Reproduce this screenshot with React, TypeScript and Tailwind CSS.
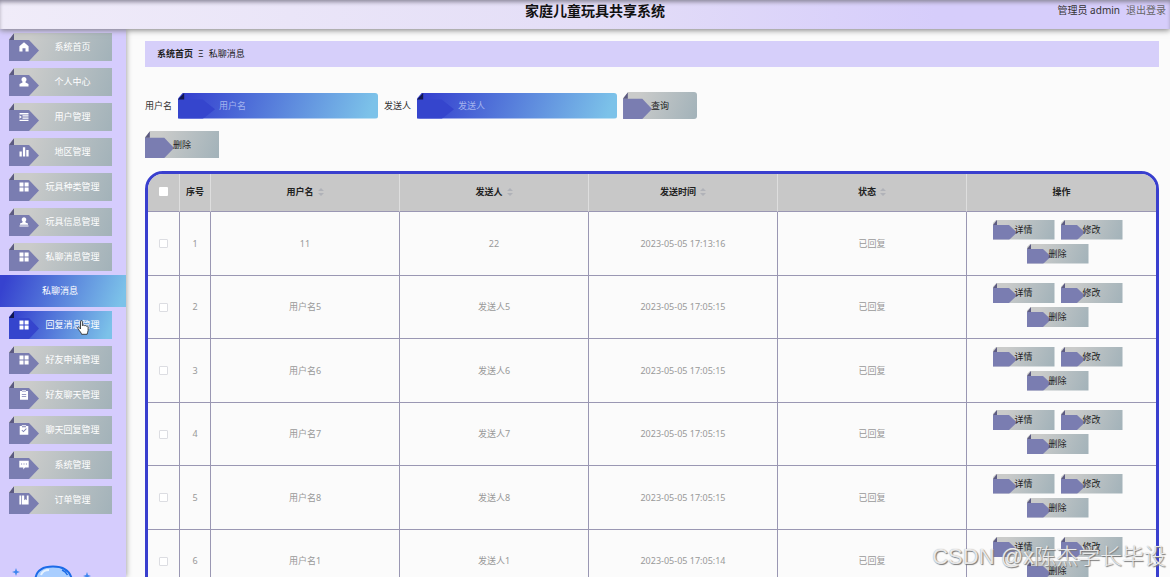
import React from 'react'

type IconName = 'home' | 'user' | 'list' | 'chart' | 'grid' | 'stamp' | 'clipboard' | 'check' | 'chat' | 'book'

const icons: Record<IconName, React.ReactNode> = {
    home: <path d="M5 .3 9.6 4.2V9.6H6.5V6.2H3.5V9.6H.4V4.2Z" />,
    user: <path d="M5 0a2.6 2.6 0 0 1 1.500 4.700v.8L9.500 7v2.600H.5V7l3-1.500v-.8A2.600 2.600 0 0 1 5 0Z" />,
    list: <path d="M.5 1h9v1.400h-9zM3.500 3.300h6v1.300h-6zM3.500 5.500h6v1.300h-6zM.5 7.700h9v1.400h-9zM.5 3.300 2.800 5 .5 6.800z" />,
    chart: <path d="M.5 4.500h2.300v5H.5zM3.900.3h2.300v9.200H3.900zM7.300 3h2.300v6.500H7.300z" />,
    grid: <path d="M.5.5h4v4h-4zM5.600.5h4v4h-4zM.5 5.600h4v4h-4zM5.600 5.600h4v4h-4z" />,
    stamp: <path d="M5 .2a2.400 2.400 0 0 1 1.400 4.300c0 1 .5 1.500 2.600 1.900V7.800H1V6.400c2.100-.4 2.600-.9 2.600-1.900A2.400 2.400 0 0 1 5 .2ZM.5 8.500h9v1.100h-9z" />,
    clipboard: <path fillRule="evenodd" d="M1 1h2V.2h4V1h2v8.800H1ZM3 1.800h4V1.300H3zM2.800 4v.7h4.400V4zM2.800 6.300V7h4.400v-.7z" />,
    check: <path fillRule="evenodd" d="M.7 1h2.100V.2h4.400V1h2.100v8.800H.7ZM3 1.200v1h4v-1zM2.500 5.300l1.900 2 3.300-3.400-.6-.6-2.700 2.800-1.300-1.400z" />,
    chat: <path fillRule="evenodd" d="M.3.800h9.400v6.800H6L4.300 9.500V7.600H.3ZM2.100 3.600v1h1v-1zM4.500 3.600v1h1v-1zM6.900 3.600v1h1v-1z" />,
    book: <path d="M.4.600h1.800v8.900H.4zM2.900.6h2.300v4.600l1.300-1 1.300 1V.6h1.800v8.900H2.900z" />,
}

const menuTop: { icon: IconName; text: string }[] = [
    { icon: 'home', text: '系统首页' },
    { icon: 'user', text: '个人中心' },
    { icon: 'list', text: '用户管理' },
    { icon: 'chart', text: '地区管理' },
    { icon: 'grid', text: '玩具种类管理' },
    { icon: 'stamp', text: '玩具信息管理' },
    { icon: 'grid', text: '私聊消息管理' },
]

const menuBottom: { icon: IconName; text: string; hover?: boolean }[] = [
    { icon: 'grid', text: '回复消息管理', hover: true },
    { icon: 'grid', text: '好友申请管理' },
    { icon: 'clipboard', text: '好友聊天管理' },
    { icon: 'check', text: '聊天回复管理' },
    { icon: 'chat', text: '系统管理' },
    { icon: 'book', text: '订单管理' },
]

const rows = [
    { user: '11', sender: '22', time: '2023-05-05 17:13:16' },
    { user: '用户名5', sender: '发送人5', time: '2023-05-05 17:05:15' },
    { user: '用户名6', sender: '发送人6', time: '2023-05-05 17:05:15' },
    { user: '用户名7', sender: '发送人7', time: '2023-05-05 17:05:15' },
    { user: '用户名8', sender: '发送人8', time: '2023-05-05 17:05:15' },
    { user: '用户名1', sender: '发送人1', time: '2023-05-05 17:05:14' },
]

const grey = 'bg-linear-[110deg,#cacbca_20%,#a2b2b9]'
const blue = 'bg-linear-[110deg,#3642cf_5%,#7cc2e9_95%]'
const cut = '[clip-path:polygon(5px_0,100%_0,100%_100%,0_100%,0_6px)]'
const cutSmall = '[clip-path:polygon(4px_0,100%_0,100%_100%,0_100%,0_4px)]'

// arrow label with the folded corner
const Ribbon = ({ active, className }: { active?: boolean; className: string }) => (
    <svg className={`absolute left-0 top-0 h-full ${className}`} viewBox="0 0 30 28" preserveAspectRatio="none" aria-hidden="true">
        <path d="M0 7H20L30 17.500 20 28H0Z" fill={active ? '#3545cd' : '#7a7db1'} />
        <path d="M0 7 5 0V7Z" fill={active ? '#12174f' : '#5c5a82'} />
    </svg>
)

const MenuItem = ({ icon, text, hover }: { icon: IconName; text: string; hover?: boolean }) => (
    <li>
        <button className={`relative flex h-7 w-full items-center justify-center pl-6 text-white cursor-pointer ${cut} ${hover ? blue : grey}`}>
            <Ribbon active={hover} className="w-[30px]" />
            <svg className="absolute left-[10px] top-[9px] size-[10px]" viewBox="0 0 10 10" fill="#fff" aria-hidden="true">{icons[icon]}</svg>
            <span className="relative">{text}</span>
        </button>
    </li>
)

const BigButton = ({ text, className = '' }: { text: string; className?: string }) => (
    <button className={`relative h-[27px] w-[74px] text-[#222] cursor-pointer ${cut} ${grey} ${className}`}>
        <Ribbon className="w-[29px]" />
        <span className="relative">{text}</span>
    </button>
)

const SmallButton = ({ text }: { text: string }) => (
    <button className={`relative h-5 w-[62px] text-[#222] cursor-pointer ${cutSmall} ${grey}`}>
        <Ribbon className="w-[24px]" />
        <span className="relative">{text}</span>
    </button>
)

const SearchField = ({ id, text }: { id: string; text: string }) => (
    <div className="flex items-center gap-[6px]">
        <label htmlFor={id}>{text}</label>
        <div className={`relative h-[26px] w-[200px] rounded-[3px] ${cut} ${blue}`}>
            <Ribbon active className="w-[37px]" />
            <input id={id} placeholder={text} className="relative h-full w-full bg-transparent pl-[41px] text-white outline-none placeholder:text-[#a3b3ee]" />
        </div>
    </div>
)

const Sortable = ({ text }: { text: string }) => (
    <th className="border-r border-[#dedede]">
        <span className="inline-flex items-center gap-1">
            {text}
            <svg className="h-2 w-[6px]" viewBox="0 0 6 8" fill="#b0b2b8" aria-hidden="true"><path d="M3 0 6 3H0ZM3 8 0 5H6Z" /></svg>
        </span>
    </th>
)

const App = () => {
    const cell = 'border-r border-b border-[#9a97b3] last:border-r-0'

    return (
        <div lang="zh-CN" className="relative flex h-screen flex-col overflow-hidden bg-[#fbfbfb] text-[9px] leading-3 text-[#333] font-['Noto_Sans','Noto_Sans_CJK_SC',sans-serif]">
            <header className="relative z-10 grid h-[29px] shrink-0 grid-cols-[1fr_auto_1fr] bg-linear-to-r from-[#f0ecf9] via-[#e4def7] via-50% to-[#d6cdfb] to-80% pl-5 shadow-[0_1px_6px_#777,inset_0_3px_4px_-1px_#8a8799]">
                <h1 className="col-start-2 text-sm leading-[21px] font-bold text-[#111]">家庭儿童玩具共享系统</h1>
                <div className="flex justify-end gap-[6px] pr-1 text-[10px] leading-[21px]">
                    <span>管理员 admin</span>
                    <a href="#" className="text-[#666]">退出登录</a>
                </div>
            </header>

            <div className="flex min-h-0 flex-1">
                <aside className="relative flex w-[126px] shrink-0 flex-col bg-[#d5ccfd] pt-1 shadow-[1px_0_5px_#aaa]">
                    <ul className="flex flex-col gap-[7px] pl-[9px] pr-[14px]">
                        {menuTop.map((item) => <MenuItem key={item.text} {...item} />)}
                    </ul>
                    <a href="#" className={`my-1 flex h-8 items-center justify-center pr-[6px] text-white ${blue}`}>私聊消息</a>
                    <ul className="flex flex-col gap-[7px] pl-[9px] pr-[14px]">
                        {menuBottom.map((item) => <MenuItem key={item.text} {...item} />)}
                    </ul>
                    {/* hand pointer over the hovered entry */}
                    <svg className="absolute left-[77px] top-[291px] h-[15px] w-3" viewBox="0 0 12 15" fill="#fff" stroke="#333" strokeWidth=".9" strokeLinejoin="round" aria-hidden="true">
                        <path d="M3.500 9V1.700c0-1.400 1.900-1.400 1.900 0v4c.3-1 1.700-.9 1.900.2.400-.8 1.700-.6 1.900.4.600-.6 1.900-.3 1.900.8v3.500c0 1.300-.9 2-1 3.700H4.600c-.2-1.500-2-3-3.800-6-.6-1.300.7-1.800 1.500-.8Z" />
                    </svg>
                    <svg className="absolute bottom-0 left-[10px] h-[15px] w-[84px]" viewBox="0 0 84 15" aria-hidden="true">
                        <path d="M25.500 16C27 7 34 4.500 43 4.500S59 7 61.500 16" fill="#a9ceff" stroke="#1b6be8" strokeWidth="2" />
                        <path d="M52 8c3 1 4.500 3 5.500 5" fill="none" stroke="#1b6be8" strokeWidth="1.500" />
                        <path d="M31 13c1-3 4-5 8-5" fill="none" stroke="#e6f2ff" strokeWidth="2" />
                        <path d="m6 6 1 3 3 1-3 1-1 3-1-3-3-1 3-1ZM77 10l1 3 3 1-3 1h-2l-3-1 3-1Z" fill="#3e86ee" />
                    </svg>
                </aside>

                <main className="min-w-0 flex-1 pl-[19px] pr-[11px] pt-3">
                    <nav className="flex h-[26px] items-center gap-[5px] bg-[#d6cffa] pl-3 text-[#222]">
                        <a href="#" className="font-bold">系统首页</a>
                        <span>Ξ</span>
                        <span>私聊消息</span>
                    </nav>

                    <form className="mt-[25px] flex items-center gap-[6px]">
                        <SearchField id="user" text="用户名" />
                        <SearchField id="sender" text="发送人" />
                        <BigButton text="查询" className="rounded-[3px]" />
                    </form>
                    <div className="mt-3 flex">
                        <BigButton text="删除" />
                    </div>

                    <div className="mt-[13px] overflow-hidden rounded-[18px] border-[3px] border-[#393fce]">
                        <table className="w-full table-fixed border-separate border-spacing-0 text-center text-[#999]">
                            <colgroup>
                                <col className="w-8" />
                                <col className="w-[31px]" />
                                <col span={5} />
                            </colgroup>
                            <thead className="h-[38px] bg-[#c8c8c8] text-[#222] [&_th]:border-b [&_th]:border-b-[#9a97b3] [&_th]:pb-[2px]">
                                <tr>
                                    <th className="border-r border-[#dedede]"><input type="checkbox" aria-label="全选" className="block mx-auto size-[9px] appearance-none rounded-[1px] bg-white" /></th>
                                    <th className="border-r border-[#dedede]">序号</th>
                                    <Sortable text="用户名" />
                                    <Sortable text="发送人" />
                                    <Sortable text="发送时间" />
                                    <Sortable text="状态" />
                                    <th>操作</th>
                                </tr>
                            </thead>
                            <tbody>
                                {rows.map((row, i) => (
                                    <tr key={i} className="odd:h-16 even:h-[63px]">
                                        <td className={cell}><input type="checkbox" aria-label={`选择 ${i + 1}`} className="block mx-auto size-[9px] appearance-none rounded-[1px] border border-[#dcdde2] bg-white" /></td>
                                        <td className={cell}>{i + 1}</td>
                                        <td className={cell}>{row.user}</td>
                                        <td className={cell}>{row.sender}</td>
                                        <td className={cell}>{row.time}</td>
                                        <td className={cell}>已回复</td>
                                        <td className={cell}>
                                            <div className="mx-auto flex w-[140px] flex-wrap justify-center gap-x-[6px] gap-y-1 pr-2 pb-1">
                                                <SmallButton text="详情" />
                                                <SmallButton text="修改" />
                                                <SmallButton text="删除" />
                                            </div>
                                        </td>
                                    </tr>
                                ))}
                            </tbody>
                        </table>
                    </div>
                </main>
            </div>

            <div className="pointer-events-none absolute bottom-[2px] right-1 z-20 font-['Liberation_Sans','Noto_Sans_CJK_SC',sans-serif] text-[22px] leading-9 font-light text-white/80 [text-shadow:1px_1px_1px_#777,0_0_1px_#999]">CSDN @x陈杰学长毕设</div>
        </div>
    )
}

export default App
